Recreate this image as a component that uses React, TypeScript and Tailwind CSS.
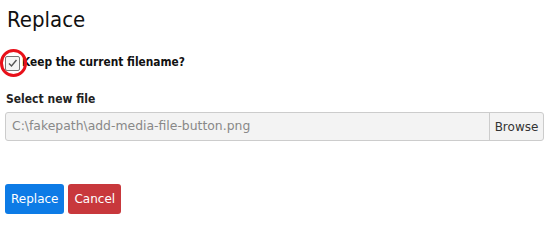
import React from "react";

export default function App() {
  return (
    <div className="w-[550px] h-[216px] bg-white overflow-hidden" style={{ fontFamily: "'DejaVu Sans', Verdana, sans-serif" }}>
      <div className="pl-[5px] pr-[6px]">
        <h1 className="pt-[7px] pl-[2px] text-[22px] leading-[26px] text-[#111]" style={{ fontFamily: "'DejaVu Sans Condensed', sans-serif" }}>
          Replace
        </h1>
        <div className="relative mt-[22px] flex items-center h-[16px]">
          <span className="relative w-[15px] h-[15px] border border-[#777] rounded-[2px] bg-[#f5f5f5] flex items-center justify-center">
            <svg width="11" height="11" viewBox="0 0 11 11">
              <path d="M2 5.5 L4.5 8 L9.5 2" fill="none" stroke="#555" strokeWidth="1.4" />
            </svg>
          </span>
          <span className="absolute left-[-5px] top-[-6px] w-[27px] h-[28px] rounded-full border-[3px] border-[#e8101a]" />
          <span className="ml-[2px] text-[11.8px] font-bold text-[#111]" style={{ fontFamily: "'DejaVu Sans Condensed', sans-serif" }}>Keep the current filename?</span>
        </div>
        <div className="mt-[19px] text-[12px] font-bold text-[#222] pl-[1px]" style={{ fontFamily: "'DejaVu Sans Condensed', sans-serif" }}>Select new file</div>
        <div className="mt-[4px] flex h-[29px] border border-[#ccc] rounded-[3px] bg-[#f3f3f3]">
          <div className="flex-1 flex items-center pl-[6px] text-[12.4px] text-[#888]">C:\fakepath\add-media-file-button.png</div>
          <div className="w-[54px] border-l border-[#ccc] flex items-center justify-center text-[12px] text-[#333]">Browse</div>
        </div>
        <div className="mt-[43px] flex gap-[4px]">
          <button className="h-[30px] px-[6px] bg-[#0d7be6] text-white text-[12px] rounded-[3px]">Replace</button>
          <button className="h-[30px] px-[6px] bg-[#c8383c] text-white text-[12px] rounded-[3px]">Cancel</button>
        </div>
      </div>
    </div>
  );
}
